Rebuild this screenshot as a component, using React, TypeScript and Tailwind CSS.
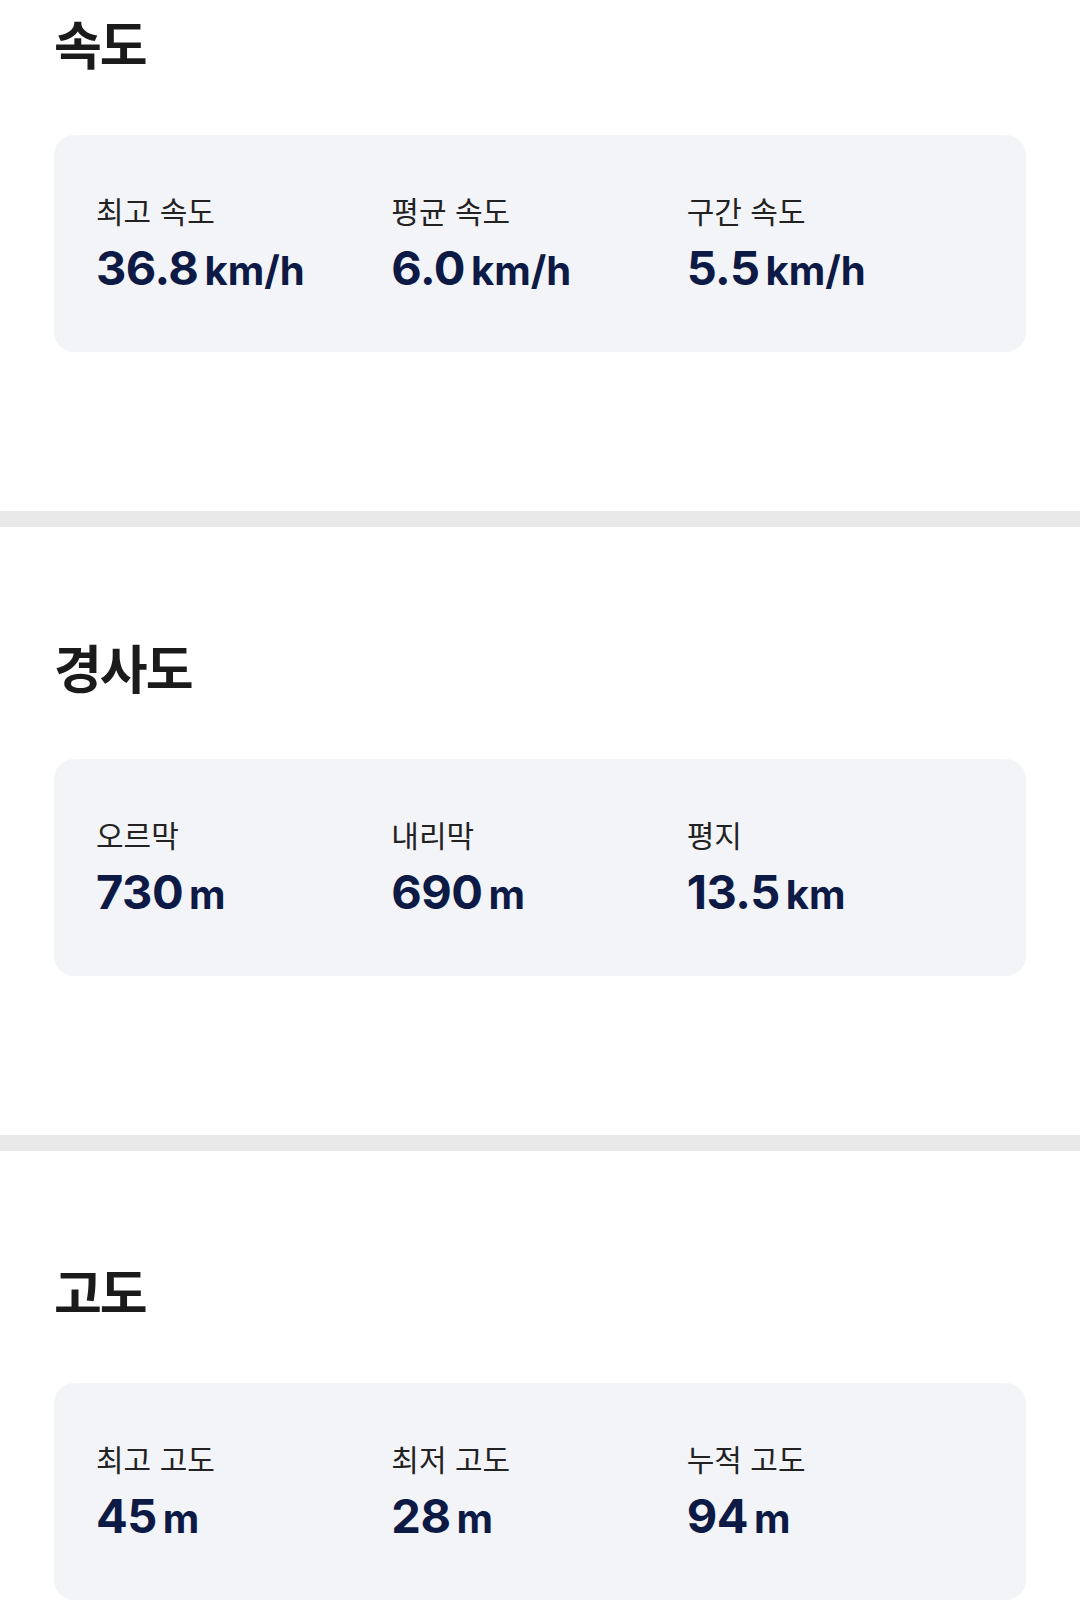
const sections = [
  {
    title: "속도",
    items: [
      { label: "최고 속도", value: "36.8", unit: "km/h" },
      { label: "평균 속도", value: "6.0", unit: "km/h" },
      { label: "구간 속도", value: "5.5", unit: "km/h" },
    ],
  },
  {
    title: "경사도",
    items: [
      { label: "오르막", value: "730", unit: "m" },
      { label: "내리막", value: "690", unit: "m" },
      { label: "평지", value: "13.5", unit: "km" },
    ],
  },
  {
    title: "고도",
    items: [
      { label: "최고 고도", value: "45", unit: "m" },
      { label: "최저 고도", value: "28", unit: "m" },
      { label: "누적 고도", value: "94", unit: "m" },
    ],
  },
];

const font = "font-['Inter','Noto_Sans_CJK_KR',sans-serif]";

const StatSection = ({
  title,
  items,
  first,
}: {
  title: string;
  items: { label: string; value: string; unit: string }[];
  first?: boolean;
}) => (
  <section className={`bg-white px-[54px] ${first ? "pt-[12px]" : "pt-[109px]"} pb-[159px]`}>
    <h2 className="text-[52px] leading-[70px] font-bold text-[#1b1b1b] tracking-[-2px]">{title}</h2>
    <div className="mt-[53px] rounded-[20px] bg-[#f3f4f8] pl-[42px] pr-[44px] pt-[57px] pb-[53px] grid grid-cols-3">
      {items.map((item) => (
        <div key={item.label} className="flex flex-col">
          <span className="text-[30px] leading-[40px] text-[#222222]">{item.label}</span>
          <span className="mt-[8px] flex items-baseline text-[#0d1a45] font-bold leading-[56px]">
            <span className="text-[47px] tracking-[-0.5px]">{item.value}</span>
            <span className="ml-[6px] text-[40px]">{item.unit}</span>
          </span>
        </div>
      ))}
    </div>
  </section>
);

export default function App() {
  return (
    <div className={`${font} w-[1080px] bg-[#e9e9e9] flex flex-col gap-[16px]`}>
      {sections.map((s, i) => (
        <StatSection key={s.title} title={s.title} items={s.items} first={i === 0} />
      ))}
    </div>
  );
}
